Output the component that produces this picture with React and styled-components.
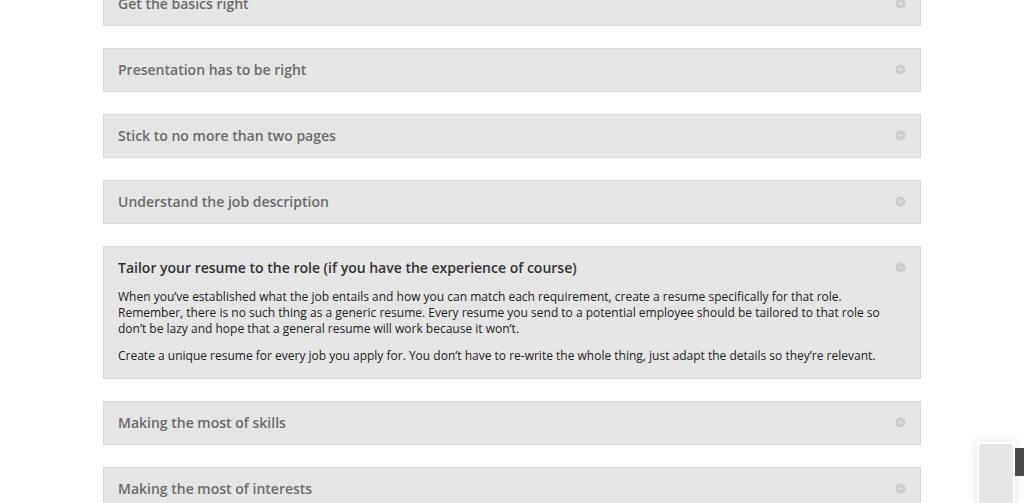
import React, { useState } from 'react';
import styled, { createGlobalStyle } from 'styled-components';

const GlobalStyle = createGlobalStyle`
  html, body {
    margin: 0;
    padding: 0;
    background: #ffffff;
    overflow: hidden;
    font-family: "Open Sans", "Liberation Sans", sans-serif;
  }
`;

const toggles = [
  { title: 'Get the basics right' },
  { title: 'Presentation has to be right' },
  { title: 'Stick to no more than two pages' },
  { title: 'Understand the job description' },
  {
    title: 'Tailor your resume to the role (if you have the experience of course)',
    body: [
      'When you’ve established what the job entails and how you can match each requirement, create a resume specifically for that role. Remember, there is no such thing as a generic resume. Every resume you send to a potential employee should be tailored to that role so don’t be lazy and hope that a general resume will work because it won’t.',
      'Create a unique resume for every job you apply for. You don’t have to re-write the whole thing, just adapt the details so they’re relevant.',
    ],
    open: true,
  },
  { title: 'Making the most of skills' },
  { title: 'Making the most of interests' },
];

function ToggleIcon({ open }) {
  return (
    <Icon viewBox="0 0 12 12" aria-hidden="true">
      <circle cx="6" cy="6" r="5.5" fill="#cbcbcb" />
      <rect x="3.2" y="5.4" width="5.6" height="1.2" fill="#e2e2e2" />
      {!open && <rect x="5.4" y="3.2" width="1.2" height="5.6" fill="#e2e2e2" />}
    </Icon>
  );
}

function Toggle({ item }) {
  const [open, setOpen] = useState(!!item.open);
  return (
    <Box>
      <Header onClick={() => setOpen(!open)}>
        <Title $open={open}>{item.title}</Title>
        <ToggleIcon open={open} />
      </Header>
      {open && item.body && (
        <Content>
          {item.body.map((p, i) => (
            <p key={i}>{p}</p>
          ))}
        </Content>
      )}
    </Box>
  );
}

export default function App() {
  return (
    <Page>
      <GlobalStyle />
      <List>
        {toggles.map((t) => (
          <Toggle key={t.title} item={t} />
        ))}
      </List>
      <Widget>
        <WidgetCard />
        <WidgetTab />
      </Widget>
    </Page>
  );
}

const Page = styled.div`
  width: 1024px;
  height: 503px;
  overflow: hidden;
`;

const List = styled.div`
  width: 818px;
  margin: -18px 0 0 103px;
  display: flex;
  flex-direction: column;
  gap: 22px;
`;

const Box = styled.div`
  background: #e5e5e5;
  border: 1px solid #dadada;
  box-sizing: border-box;
  padding: 0 14px;
`;

const Header = styled.div`
  height: 42px;
  box-sizing: border-box;
  padding-bottom: 2px;
  display: flex;
  align-items: center;
  justify-content: space-between;
  cursor: pointer;
`;

const Title = styled.h5`
  margin: 0;
  font-size: 14px;
  font-weight: 600;
  color: ${(p) => (p.$open ? '#333333' : '#6b6b6b')};
`;

const Icon = styled.svg`
  width: 11px;
  height: 11px;
  flex-shrink: 0;
`;

const Content = styled.div`
  padding: 0 0 3px 0;

  p {
    margin: 0 0 11px 0;
    font-size: 12px;
    line-height: 16px;
    color: #222222;
  }
`;

const Widget = styled.div`
  position: fixed;
  left: 977px;
  top: 442px;
  display: flex;
  align-items: flex-start;
`;

const WidgetCard = styled.div`
  width: 34px;
  height: 70px;
  background: #e6e6e6;
  border: 2px solid #ffffff;
  border-radius: 2px;
  box-shadow: 0 0 12px rgba(0, 0, 0, 0.12);
`;

const WidgetTab = styled.div`
  width: 10px;
  height: 28px;
  margin-top: 6px;
  background: #4a4a4a;
`;
